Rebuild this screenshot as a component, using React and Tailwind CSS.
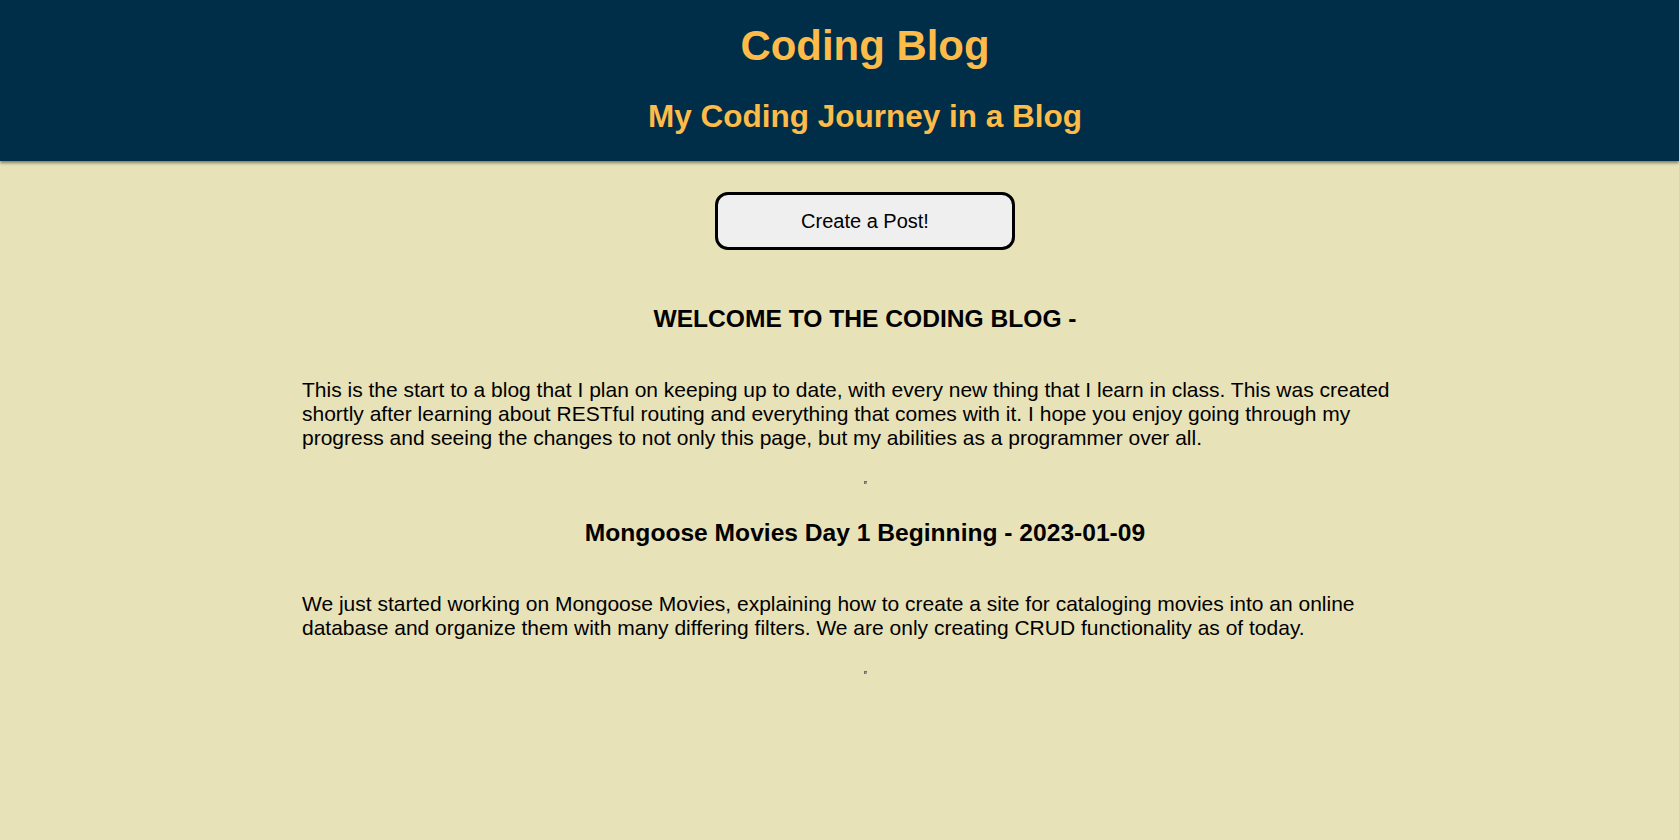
import React from 'react';

const posts = [
  {
    title: 'WELCOME TO THE CODING BLOG -',
    body: 'This is the start to a blog that I plan on keeping up to date, with every new thing that I learn in class. This was created shortly after learning about RESTful routing and everything that comes with it. I hope you enjoy going through my progress and seeing the changes to not only this page, but my abilities as a programmer over all.',
  },
  {
    title: 'Mongoose Movies Day 1 Beginning - 2023-01-09',
    body: 'We just started working on Mongoose Movies, explaining how to create a site for cataloging movies into an online database and organize them with many differing filters. We are only creating CRUD functionality as of today.',
  },
];

const App = () => {
  return (
    <div className="min-h-[840px] bg-[#e8e2b8] text-black font-['Liberation_Sans',Arial,sans-serif]">
      {/* Header */}
      <header className="relative z-10 bg-[#002e48] shadow-[0_2px_3px_rgba(0,0,0,0.45)] pt-[21px] pb-[26px] pl-[51px] text-center text-[#fdbb4a] font-bold">
        <h1 className="text-[41.9px] leading-[49px]">Coding Blog</h1>
        <h2 className="mt-[28px] text-[31.5px] leading-[37px]">My Coding Journey in a Blog</h2>
      </header>

      <main className="flex flex-col items-center pl-[51px] pb-10">
        <button className="mt-[31px] w-[300px] h-[58px] rounded-[13px] border-[3px] border-black bg-[#efefef] text-[20px] text-black">
          Create a Post!
        </button>

        <div className="w-[1126px] mt-[54px]">
          {posts.map((post, i) => (
            <div key={i} className={i > 0 ? 'mt-[34px]' : ''}>
              <h3 className="text-center text-[24.6px] leading-[29px] font-bold">{post.title}</h3>
              <p className="mt-[45px] text-[21px] leading-[24px]">{post.body}</p>
              <div className="mt-[31px] flex justify-center">
                <span className="block w-[3px] h-[3px] bg-[#9c998a] border-t border-l border-[#6f6d66]" />
              </div>
            </div>
          ))}
        </div>
      </main>
    </div>
  );
};

export default App;
